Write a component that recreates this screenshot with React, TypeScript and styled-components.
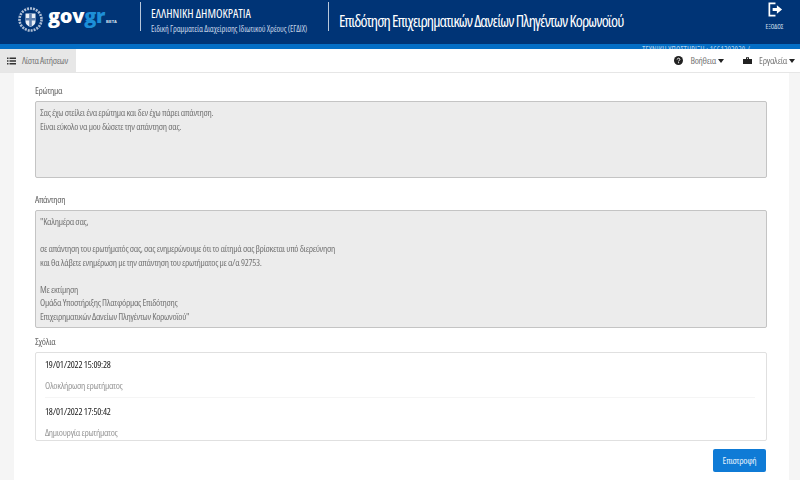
import React from "react";
import styled, { createGlobalStyle } from "styled-components";

const Global = createGlobalStyle`
  html, body { margin: 0; padding: 0; background: #f5f5f5; }
  body { font-family: "Open Sans", "Liberation Sans", sans-serif; font-stretch: 75%; overflow: hidden; }
  * { box-sizing: border-box; }
`;

const Page = styled.div`
  width: 800px;
  height: 480px;
  display: flex;
  flex-direction: column;
  overflow: hidden;
  will-change: opacity;
`;

const Header = styled.header`
  height: 44px;
  background: #003476;
  display: flex;
  align-items: center;
  color: #fff;
  flex: none;
`;

const Brand = styled.div`
  width: 140px;
  height: 100%;
  padding: 0 0 5px 18px;
  display: flex;
  align-items: center;
  gap: 5px;
  flex: none;
`;

const Wordmark = styled.span`
  font-stretch: 100%;
  font-weight: 800;
  font-size: 20px;
  letter-spacing: -0.3px;
  line-height: 22px;
  margin-top: -2px;
  white-space: nowrap;
  color: #fff;
`;

const WordmarkAccent = styled.span`
  color: #1d8fd8;
`;

const Beta = styled.span`
  font-family: "Liberation Sans", sans-serif;
  font-stretch: 100%;
  font-size: 4px;
  font-weight: 700;
  letter-spacing: 0.1px;
  margin-left: 1px;
  color: #dce6f2;
`;

const Divider = styled.div`
  width: 1px;
  height: 29px;
  margin-bottom: 11px;
  background: #b8c7da;
  flex: none;
`;

const Ministry = styled.div`
  width: 187px;
  padding: 0 0 4px 10px;
  flex: none;
`;

const MinistryName = styled.div`
  font-size: 12px;
  line-height: 14px;
  color: #fff;
  white-space: nowrap;
`;

const MinistrySub = styled.div`
  font-size: 8.4px;
  line-height: 11px;
  letter-spacing: -0.1px;
  margin-top: 2px;
  color: #c6d4e6;
  white-space: nowrap;
`;

const Title = styled.h1`
  flex: 1;
  min-width: 0;
  margin: 0 0 2px;
  padding-left: 10px;
  font-size: 16px;
  font-weight: 400;
  line-height: 24px;
  letter-spacing: -0.85px;
  color: #fff;
  white-space: nowrap;
`;

const LogoutBlock = styled.div`
  width: 50px;
  height: 100%;
  display: flex;
  flex-direction: column;
  align-items: center;
  padding: 2px 1px 0 0;
  flex: none;
`;

const LogoutLabel = styled.span`
  font-size: 6.6px;
  line-height: 8px;
  margin-top: 5px;
  color: #d8e2ef;
`;

const Stripe = styled.div`
  height: 5px;
  background: #046ec5;
  flex: none;
  overflow: hidden;
  display: flex;
  justify-content: flex-end;
  padding-right: 50px;
`;

const StripeText = styled.span`
  font-size: 8px;
  line-height: 8px;
  margin-top: 2px;
  letter-spacing: 0.15px;
  color: #b8d6ef;
  white-space: nowrap;
`;

const Toolbar = styled.nav`
  height: 24px;
  background: #fff;
  border-bottom: 1px solid #e6e6e6;
  display: flex;
  align-items: stretch;
  flex: none;
`;

const ListTab = styled.div`
  width: 76px;
  padding-left: 7px;
  background: #e7e7e7;
  display: flex;
  align-items: center;
  gap: 6px;
  font-size: 9.5px;
  letter-spacing: -0.3px;
  white-space: nowrap;
  color: #777;
  flex: none;
`;

const ToolMenus = styled.div`
  margin-left: auto;
  display: flex;
  align-items: center;
  gap: 19px;
  padding-right: 5px;
`;

const ToolMenu = styled.div`
  display: flex;
  align-items: center;
  font-size: 9.5px;
  letter-spacing: -0.25px;
  white-space: nowrap;
  color: #777;
`;

const ToolIcon = styled.svg`
  width: 9px;
  height: 9px;
  margin-right: 7px;
  flex: none;
`;

const Caret = styled.span`
  width: 0;
  height: 0;
  margin-left: 2px;
  border-left: 3.5px solid transparent;
  border-right: 3.5px solid transparent;
  border-top: 4px solid #222;
`;

const Panel = styled.main`
  width: 775px;
  margin-left: 14px;
  flex: 1;
  background: #fff;
  padding: 12px 22px 0 21px;
  display: flex;
  flex-direction: column;
`;

const FieldLabel = styled.label`
  display: block;
  font-size: 9.5px;
  line-height: 12px;
  letter-spacing: -0.3px;
  color: #666;
  margin-bottom: 4px;
`;

const ReadOnlyBox = styled.div<{ $height: number; $gap: number }>`
  height: ${(p) => p.$height}px;
  margin-bottom: ${(p) => p.$gap}px;
  background: #ececec;
  border: 1px solid #c4c4c4;
  border-radius: 2px;
  padding: 4px;
  font-size: 9.5px;
  line-height: 13.5px;
  letter-spacing: -0.3px;
  color: #767676;
  white-space: pre-line;
  overflow: hidden;
`;

const CommentsBox = styled.div`
  height: 89px;
  border: 1px solid #e0e0e0;
  border-radius: 2px;
  padding: 0 11px 0 9px;
  overflow: hidden;
`;

const Comment = styled.div`
  padding: 6px 0 5px;
  & + & {
    padding-top: 8px;
    border-top: 1px solid #f5f5f5;
  }
`;

const CommentDate = styled.div`
  font-size: 9.5px;
  line-height: 12px;
  letter-spacing: -0.2px;
  color: #222;
`;

const CommentText = styled.div`
  font-size: 9.5px;
  line-height: 12px;
  letter-spacing: -0.3px;
  margin-top: 9px;
  color: #999;
`;

const Actions = styled.div`
  display: flex;
  justify-content: flex-end;
  margin-top: 8px;
  padding-right: 1px;
`;

const BackButton = styled.button`
  width: 53px;
  height: 23px;
  padding: 0;
  background: #0f7bd6;
  border: 0;
  border-radius: 2px;
  color: #e6f2fc;
  font-family: inherit;
  font-stretch: inherit;
  font-size: 9.5px;
  letter-spacing: -0.25px;
`;

const Emblem = () => (
  <svg width="25" height="25" viewBox="0 0 25 25" aria-hidden="true">
    <circle cx="12.5" cy="12.5" r="11" fill="none" stroke="#aebfd6" strokeWidth="2.6" strokeDasharray="2 1" />
    <path d="M7.5 6.5h10v8c0 3-2.500 4.500-5 5.500-2.500-1-5-2.500-5-5.500z" fill="#e8eef6" />
    <path d="M11.200 6.500h2.600v13h-2.600zM7.500 11h10v2.500h-10z" fill="#5d7fae" />
  </svg>
);

const LogoutIcon = () => (
  <svg width="16" height="16" viewBox="0 0 17 17" aria-hidden="true">
    <path d="M9 1.500H2.500v13H9" fill="none" stroke="#fff" strokeWidth="1.800" />
    <path d="M6 6.500h4.500V3.500L16 8l-5.500 4.500v-3H6z" fill="#fff" />
  </svg>
);

const ListIcon = () => (
  <svg width="9" height="8" viewBox="0 0 9 8" aria-hidden="true">
    <path d="M0 .5h1.500V2H0zM0 3.300h1.500v1.500H0zM0 6h1.500v1.500H0zM2.500 .5H9V2H2.500zM2.500 3.300H9v1.500H2.500zM2.500 6H9v1.500H2.500z" fill="#333" />
  </svg>
);

export default function App() {
  return (
    <Page>
      <Global />
      <Header>
        <Brand>
          <Emblem />
          <Wordmark>
            gov<WordmarkAccent>gr</WordmarkAccent>
            <Beta>BETA</Beta>
          </Wordmark>
        </Brand>
        <Divider />
        <Ministry>
          <MinistryName>ΕΛΛΗΝΙΚΗ ΔΗΜΟΚΡΑΤΙΑ</MinistryName>
          <MinistrySub>Ειδική Γραμματεία Διαχείρισης Ιδιωτικού Χρέους (ΕΓΔΙΧ)</MinistrySub>
        </Ministry>
        <Divider />
        <Title>Επιδότηση Επιχειρηματικών Δανείων Πληγέντων Κορωνοϊού</Title>
        <LogoutBlock>
          <LogoutIcon />
          <LogoutLabel>ΕΞΟΔΟΣ</LogoutLabel>
        </LogoutBlock>
      </Header>
      <Stripe>
        <StripeText>ΤΕΧΝΙΚΗ ΥΠΟΣΤΗΡΙΞΗ : 1661202020 /</StripeText>
      </Stripe>
      <Toolbar>
        <ListTab>
          <ListIcon />
          Λίστα Αιτήσεων
        </ListTab>
        <ToolMenus>
          <ToolMenu>
            <ToolIcon viewBox="0 0 9 9" aria-hidden="true">
              <circle cx="4.500" cy="4.500" r="4.500" fill="#222" />
              <path d="M3.200 3.500c0-1.700 2.700-1.700 2.700-.1 0 1-1.300 1-1.300 2M4.600 6.200v1" stroke="#fff" strokeWidth="1" fill="none" />
            </ToolIcon>
            Βοήθεια
            <Caret />
          </ToolMenu>
          <ToolMenu>
            <ToolIcon viewBox="0 0 9 9" aria-hidden="true">
              <path d="M0 3h9v5H0zM3 3V1.300h3V3H5V2.200H4V3z" fill="#222" />
            </ToolIcon>
            Εργαλεία
            <Caret />
          </ToolMenu>
        </ToolMenus>
      </Toolbar>
      <Panel>
        <FieldLabel>Ερώτημα</FieldLabel>
        <ReadOnlyBox $height={77} $gap={16}>
          {"Σας έχω στείλει ένα ερώτημα και δεν έχω πάρει απάντηση.\nΕίναι εύκολο να μου δώσετε την απάντηση σας."}
        </ReadOnlyBox>
        <FieldLabel>Απάντηση</FieldLabel>
        <ReadOnlyBox $height={118} $gap={8}>
          {"\"Καλημέρα σας,\n\nσε απάντηση του ερωτήματός σας, σας ενημερώνουμε ότι το αίτημά σας βρίσκεται υπό διερεύνηση\nκαι θα λάβετε ενημέρωση με την απάντηση του ερωτήματος με α/α 92753.\n\nΜε εκτίμηση\nΟμάδα Υποστήριξης Πλατφόρμας Επιδότησης\nΕπιχειρηματικών Δανείων Πληγέντων Κορωνοϊού\""}
        </ReadOnlyBox>
        <FieldLabel>Σχόλια</FieldLabel>
        <CommentsBox>
          <Comment>
            <CommentDate>19/01/2022 15:09:28</CommentDate>
            <CommentText>Ολοκλήρωση ερωτήματος</CommentText>
          </Comment>
          <Comment>
            <CommentDate>18/01/2022 17:50:42</CommentDate>
            <CommentText>Δημιουργία ερωτήματος</CommentText>
          </Comment>
        </CommentsBox>
        <Actions>
          <BackButton>Επιστροφή</BackButton>
        </Actions>
      </Panel>
    </Page>
  );
}
